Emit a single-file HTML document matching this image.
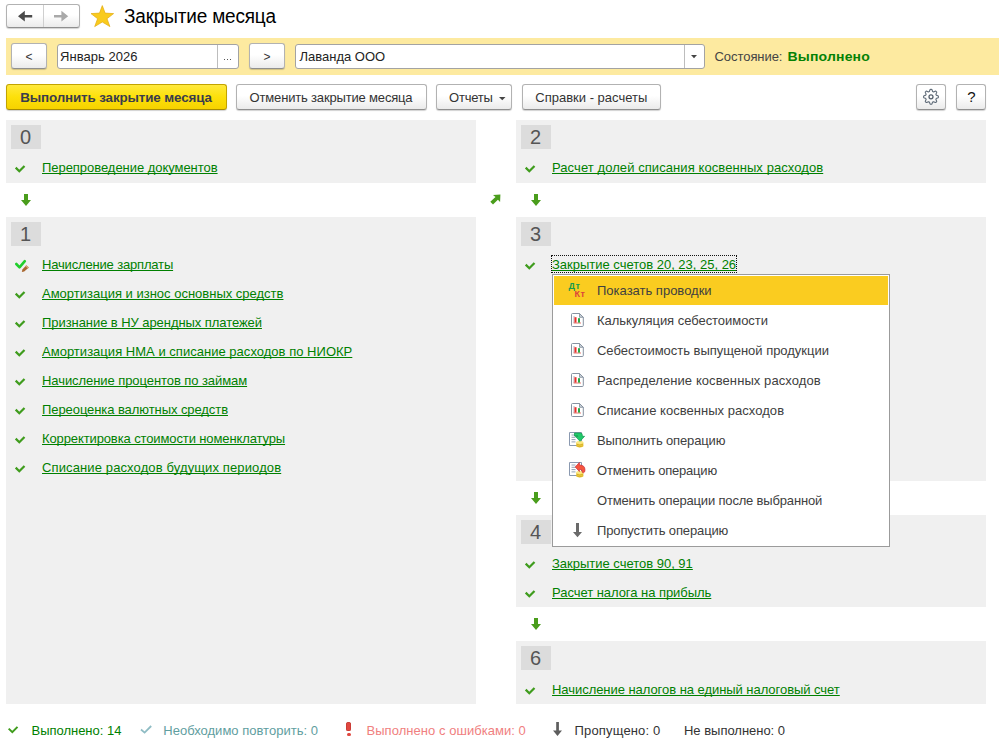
<!DOCTYPE html>
<html lang="ru">
<head>
<meta charset="utf-8">
<title>Закрытие месяца</title>
<style>
html,body{margin:0;padding:0;background:#fff;}
body{width:999px;height:751px;position:relative;overflow:hidden;font-family:"Liberation Sans",Arial,sans-serif;font-size:13px;color:#333;}
.abs{position:absolute;white-space:nowrap;}
.t{position:absolute;white-space:nowrap;font-size:13px;line-height:16px;}
.lnk{color:#008000;text-decoration:underline;text-decoration-thickness:1px;text-underline-offset:1px;text-decoration-skip-ink:none;}
.btn{position:absolute;box-sizing:border-box;border:1px solid #b2b2b2;border-bottom-color:#8f8f8f;border-radius:3px;background:linear-gradient(#ffffff 0%,#ffffff 45%,#ebebeb 100%);box-shadow:0 1px 1px rgba(0,0,0,.18);}
.inp{position:absolute;box-sizing:border-box;border:1px solid #a3a3a3;border-radius:3px;background:#fff;}
.blk{position:absolute;background:#f0f0f0;}
.num{position:absolute;width:30px;height:24px;background:#dcdcdc;color:#555;font-size:20px;line-height:24px;text-align:center;text-indent:-1px;}
svg{position:absolute;overflow:visible;}
</style>
</head>
<body>
<!-- navigation -->
<div class="btn" style="left:6px;top:4px;width:74px;height:24px;"></div>
<div class="abs" style="left:43px;top:5px;width:1px;height:22px;background:#cfcfcf;"></div>
<svg style="left:0;top:0" width="120" height="30" viewBox="0 0 120 30">
<path d="M18 16.200 L24.800 10.800 L24.800 15 L32.200 15 L32.200 17.500 L24.800 17.500 L24.800 21.600 Z" fill="#4a4a4a"/>
<path d="M68.200 16.200 L61.400 10.800 L61.400 15 L54 15 L54 17.500 L61.400 17.500 L61.400 21.600 Z" fill="#a9a9a9"/>
<path d="M102.300 5.600 L105.100 13.100 L113.600 13.600 L107 18.700 L109.900 26.600 L102.300 22 L94.700 26.600 L97.600 18.700 L91 13.600 L99.500 13.100 Z" fill="#f9cb1d" stroke="#e2aa10" stroke-width="0.700" stroke-linejoin="round"/>
</svg>
<div class="t" style="left:124.0px;top:6px;font-size:19px;line-height:22px;transform:scaleY(1.03);transform-origin:0 17px;color:#000;letter-spacing:-0.179px;">Закрытие месяца</div>

<!-- yellow band -->
<div class="abs" style="left:6px;top:38px;width:993px;height:37px;background:#fdeaa0;"></div>
<div class="btn" style="left:11px;top:43px;width:36px;height:26px;"></div>
<div class="t" style="left:25.600px;top:49px;color:#333;font-size:12px;">&lt;</div>
<div class="inp" style="left:57px;top:44px;width:182px;height:25px;"></div>
<div class="abs" style="left:217px;top:45px;width:1px;height:23px;background:#bdbdbd;"></div>
<div class="t" style="left:60.0px;top:49px;color:#222;letter-spacing:0.030px;">Январь 2026</div>
<div class="abs" style="left:224px;top:59px;width:1px;height:1px;background:#555;box-shadow:3px 0 0 #555,6px 0 0 #555;"></div>
<div class="btn" style="left:249px;top:43px;width:36px;height:26px;"></div>
<div class="t" style="left:263.600px;top:49px;color:#333;font-size:12px;">&gt;</div>
<div class="inp" style="left:295px;top:44px;width:410px;height:25px;"></div>
<div class="abs" style="left:684px;top:45px;width:1px;height:23px;background:#bdbdbd;"></div>
<div class="t" style="left:299.5px;top:49px;color:#222;">Лаванда ООО</div>
<svg style="left:691px;top:54.500px" width="6" height="4" viewBox="0 0 6 4"><path d="M0 0 L6 0 L3 3.300 Z" fill="#444"/></svg>
<div class="t" style="left:714.5px;top:49px;color:#444;letter-spacing:-0.056px;">Состояние:</div>
<div class="t" style="left:787.600px;top:48px;transform:scaleY(0.96);transform-origin:0 13px;font-size:14px;font-weight:bold;color:#058205;letter-spacing:0.16px;">Выполнено</div>

<!-- command bar -->
<div class="btn" style="left:6px;top:84px;width:221px;height:26px;background:linear-gradient(#ffe93d 0%,#fde00a 50%,#f6d200 100%);border-color:#c2a300;border-bottom-color:#a88c00;"></div>
<div class="t" style="left:20.2px;top:90px;font-size:13.4px;font-weight:bold;color:#3a3c4c;letter-spacing:-0.133px;">Выполнить закрытие месяца</div>
<div class="btn" style="left:236px;top:84px;width:191px;height:26px;"></div>
<div class="t" style="left:249.6px;top:90px;color:#333;letter-spacing:-0.170px;">Отменить закрытие месяца</div>
<div class="btn" style="left:436px;top:84px;width:76px;height:26px;"></div>
<div class="t" style="left:449.0px;top:90px;color:#333;letter-spacing:-0.200px;">Отчеты</div>
<svg style="left:498.500px;top:97px" width="7" height="3" viewBox="0 0 7 3"><path d="M0 0 L6.500 0 L3.250 3.200 Z" fill="#444"/></svg>
<div class="btn" style="left:522px;top:84px;width:139px;height:26px;"></div>
<div class="t" style="left:535.3px;top:90px;color:#333;">Справки - расчеты</div>
<div class="btn" style="left:916px;top:84px;width:30px;height:26px;"></div>
<svg style="left:0;top:0" width="999" height="120" viewBox="0 0 999 120"><path d="M938.40 96.80 L938.39 97.09 L938.38 97.38 L938.24 97.66 L937.81 97.88 L937.33 98.06 L936.84 98.20 L936.40 98.32 L936.23 98.50 L936.16 98.70 L936.08 98.90 L935.99 99.10 L935.90 99.30 L935.90 99.54 L936.12 99.94 L936.36 100.38 L936.57 100.85 L936.72 101.31 L936.63 101.61 L936.43 101.82 L936.23 102.03 L936.02 102.23 L935.81 102.43 L935.51 102.52 L935.05 102.37 L934.58 102.16 L934.14 101.92 L933.74 101.70 L933.50 101.70 L933.30 101.79 L933.10 101.88 L932.90 101.96 L932.70 102.03 L932.52 102.20 L932.40 102.64 L932.26 103.13 L932.08 103.61 L931.86 104.04 L931.58 104.18 L931.29 104.19 L931.00 104.20 L930.71 104.19 L930.42 104.18 L930.14 104.04 L929.92 103.61 L929.74 103.13 L929.60 102.64 L929.48 102.20 L929.30 102.03 L929.10 101.96 L928.90 101.88 L928.70 101.79 L928.50 101.70 L928.26 101.70 L927.86 101.92 L927.42 102.16 L926.95 102.37 L926.49 102.52 L926.19 102.43 L925.98 102.23 L925.77 102.03 L925.57 101.82 L925.37 101.61 L925.28 101.31 L925.43 100.85 L925.64 100.38 L925.88 99.94 L926.10 99.54 L926.10 99.30 L926.01 99.10 L925.92 98.90 L925.84 98.70 L925.77 98.50 L925.60 98.32 L925.16 98.20 L924.67 98.06 L924.19 97.88 L923.76 97.66 L923.62 97.38 L923.61 97.09 L923.60 96.80 L923.61 96.51 L923.62 96.22 L923.76 95.94 L924.19 95.72 L924.67 95.54 L925.16 95.40 L925.60 95.28 L925.77 95.10 L925.84 94.90 L925.92 94.70 L926.01 94.50 L926.10 94.30 L926.10 94.06 L925.88 93.66 L925.64 93.22 L925.43 92.75 L925.28 92.29 L925.37 91.99 L925.57 91.78 L925.77 91.57 L925.98 91.37 L926.19 91.17 L926.49 91.08 L926.95 91.23 L927.42 91.44 L927.86 91.68 L928.26 91.90 L928.50 91.90 L928.70 91.81 L928.90 91.72 L929.10 91.64 L929.30 91.57 L929.48 91.40 L929.60 90.96 L929.74 90.47 L929.92 89.99 L930.14 89.56 L930.42 89.42 L930.71 89.41 L931.00 89.40 L931.29 89.41 L931.58 89.42 L931.86 89.56 L932.08 89.99 L932.26 90.47 L932.40 90.96 L932.52 91.40 L932.70 91.57 L932.90 91.64 L933.10 91.72 L933.30 91.81 L933.50 91.90 L933.74 91.90 L934.14 91.68 L934.58 91.44 L935.05 91.23 L935.51 91.08 L935.81 91.17 L936.02 91.37 L936.23 91.57 L936.43 91.78 L936.63 91.99 L936.72 92.29 L936.57 92.75 L936.36 93.22 L936.12 93.66 L935.90 94.06 L935.90 94.30 L935.99 94.50 L936.08 94.70 L936.16 94.90 L936.23 95.10 L936.40 95.28 L936.84 95.40 L937.33 95.54 L937.81 95.72 L938.24 95.94 L938.38 96.22 L938.39 96.51 Z" fill="none" stroke="#5f6b78" stroke-width="1.100" stroke-linejoin="round"/><circle cx="931" cy="96.800" r="2" fill="none" stroke="#56616d" stroke-width="1.300"/></svg>
<div class="btn" style="left:956px;top:84px;width:30px;height:26px;"></div>
<div class="t" style="left:967.300px;top:88px;font-size:15px;line-height:18px;color:#111;">?</div>

<!-- left column -->
<div class="blk" style="left:6px;top:120px;width:470px;height:63px;"></div>
<div class="num" style="left:11px;top:125px;">0</div>
<div class="blk" style="left:6px;top:217px;width:470px;height:487px;"></div>
<div class="num" style="left:11px;top:222px;">1</div>

<!-- right column -->
<div class="blk" style="left:516px;top:120px;width:470px;height:63px;"></div>
<div class="num" style="left:521px;top:125px;">2</div>
<div class="blk" style="left:516px;top:217px;width:470px;height:264px;"></div>
<div class="num" style="left:521px;top:222px;">3</div>
<div class="blk" style="left:516px;top:515px;width:470px;height:92px;"></div>
<div class="num" style="left:521px;top:520px;">4</div>
<div class="blk" style="left:516px;top:641px;width:470px;height:63px;"></div>
<div class="num" style="left:521px;top:646px;">6</div>

<!-- operations: left -->
<div class="t lnk" style="left:42.0px;top:160px;letter-spacing:-0.042px;">Перепроведение документов</div>
<div class="t lnk" style="left:42.0px;top:257px;letter-spacing:-0.167px;">Начисление зарплаты</div>
<div class="t lnk" style="left:42.0px;top:286px;">Амортизация и износ основных средств</div>
<div class="t lnk" style="left:42.0px;top:315px;letter-spacing:-0.065px;">Признание в НУ арендных платежей</div>
<div class="t lnk" style="left:42.0px;top:344px;letter-spacing:0.023px;">Амортизация НМА и списание расходов по НИОКР</div>
<div class="t lnk" style="left:42.0px;top:373px;letter-spacing:-0.069px;">Начисление процентов по займам</div>
<div class="t lnk" style="left:42.0px;top:402px;letter-spacing:-0.077px;">Переоценка валютных средств</div>
<div class="t lnk" style="left:42.0px;top:431px;letter-spacing:-0.114px;">Корректировка стоимости номенклатуры</div>
<div class="t lnk" style="left:42.0px;top:460px;letter-spacing:0.121px;">Списание расходов будущих периодов</div>
<!-- operations: right -->
<div class="t lnk" style="left:552.0px;top:160px;letter-spacing:0.077px;">Расчет долей списания косвенных расходов</div>
<div class="t lnk" style="left:552.0px;top:257px;letter-spacing:-0.010px;">Закрытие счетов 20, 23, 25, 26</div>
<div class="abs" style="left:551px;top:255px;width:186px;height:18px;box-sizing:border-box;border:1px dotted #111;"></div>
<div class="t lnk" style="left:552.0px;top:556px;letter-spacing:-0.010px;">Закрытие счетов 90, 91</div>
<div class="t lnk" style="left:552.0px;top:585px;letter-spacing:-0.043px;">Расчет налога на прибыль</div>
<div class="t lnk" style="left:552.0px;top:682px;letter-spacing:-0.048px;">Начисление налогов на единый налоговый счет</div>

<!-- status icons -->
<svg style="left:0;top:0" width="999" height="751" viewBox="0 0 999 751">
<defs>
<path id="ck" d="M0.700 2.600 L4.300 6.200 L9.500 0.900" fill="none" stroke="#3f9c1d" stroke-width="2.200"/>
<path id="dn" d="M3 0 H7 V6 H10 L5 12 L0 6 H3 Z" fill="#4a9d1c"/>
</defs>
<use href="#ck" x="15" y="165"/>
<use href="#ck" x="15" y="291"/>
<use href="#ck" x="15" y="320"/>
<use href="#ck" x="15" y="349"/>
<use href="#ck" x="15" y="378"/>
<use href="#ck" x="15" y="407"/>
<use href="#ck" x="15" y="436"/>
<use href="#ck" x="15" y="465"/>
<path d="M16.300 264 L19.500 267.300 L24.800 261.200" fill="none" stroke="#20cf2c" stroke-width="2.600" stroke-linecap="round" stroke-linejoin="round"/>
<path d="M26.300 265.300 L28.900 267.600 L24.200 271.600 L21.800 272.100 L22.400 269.500 Z" fill="#a9672f"/>
<path d="M26.300 265.300 L28.900 267.600 L27.900 268.500 L25.300 266.200 Z" fill="#d7a77c"/>
<use href="#ck" x="525" y="165"/>
<use href="#ck" x="525" y="262"/>
<use href="#ck" x="525" y="561"/>
<use href="#ck" x="525" y="590"/>
<use href="#ck" x="525" y="687"/>
<use href="#dn" x="21" y="194"/>
<use href="#dn" x="531" y="194"/>
<use href="#dn" x="531" y="492"/>
<use href="#dn" x="531" y="618"/>
<path d="M490.300 201.700 L495.500 197 L493 194.900 L500.400 194.400 L500.100 202 L497.900 199.700 L493 204.500 Z" fill="#4a9d1c"/>
</svg>

<!-- footer legend -->
<svg style="left:8px;top:726px" width="10" height="8" viewBox="0 0 10 8"><path d="M0.700 2.600 L4.300 6.200 L9.500 0.900" fill="none" stroke="#3f9c1d" stroke-width="2"/></svg>
<div class="t" style="left:31.5px;top:723px;color:#008000;letter-spacing:-0.017px;">Выполнено: 14</div>
<svg style="left:140px;top:725px" width="12" height="9" viewBox="0 0 12 9"><path d="M1 4.500 L4.600 7.600 L11.200 1" fill="none" stroke="#8fbcc4" stroke-width="1.800"/></svg>
<div class="t" style="left:163.3px;top:723px;color:#5f9ea0;letter-spacing:0.009px;">Необходимо повторить: 0</div>
<div class="abs" style="left:346px;top:722px;width:5px;height:9px;background:#e0473f;border-radius:2.500px 2.500px 2px 2px;box-shadow:inset 0 0 0 0.500px #b8322c;"></div>
<div class="abs" style="left:346.500px;top:732.500px;width:4px;height:3.500px;background:#e0473f;border-radius:1.500px;"></div>
<div class="t" style="left:366.5px;top:723px;color:#f08080;letter-spacing:0.045px;">Выполнено с ошибками: 0</div>
<svg style="left:553px;top:722px" width="9" height="14" viewBox="0 0 9 14"><path d="M3.200 0 H5.900 V8.500 H9 L4.500 14 L0 8.500 H3.200 Z" fill="#5e5e5e"/></svg>
<div class="t" style="left:574.5px;top:723px;color:#333;letter-spacing:0.164px;">Пропущено: 0</div>
<div class="t" style="left:684.0px;top:723px;color:#333;letter-spacing:-0.021px;">Не выполнено: 0</div>

<!-- context menu -->
<div class="abs" style="left:552px;top:274px;width:338px;height:273px;box-sizing:border-box;background:#fff;border:1px solid #9b9b9b;"></div>
<div class="abs" style="left:554px;top:276px;width:334px;height:29px;background:#facc20;"></div>
<div class="t" style="left:568.600px;top:281px;letter-spacing:0.4px;font-size:9px;font-weight:bold;line-height:10px;color:#1b9a4b;">Дт</div>
<div class="t" style="left:574.600px;top:289px;letter-spacing:0.3px;font-size:9px;font-weight:bold;line-height:10px;color:#dc443c;">Кт</div>
<div class="t" style="left:597.0px;top:283px;color:#404040;">Показать проводки</div>
<div class="t" style="left:597.0px;top:313px;color:#404040;letter-spacing:-0.042px;">Калькуляция себестоимости</div>
<div class="t" style="left:597.0px;top:343px;color:#404040;letter-spacing:-0.022px;">Себестоимость выпущеной продукции</div>
<div class="t" style="left:597.0px;top:373px;color:#404040;letter-spacing:0.087px;">Распределение косвенных расходов</div>
<div class="t" style="left:597.0px;top:403px;color:#404040;letter-spacing:0.038px;">Списание косвенных расходов</div>
<div class="t" style="left:597.0px;top:433px;color:#404040;letter-spacing:-0.135px;">Выполнить операцию</div>
<div class="t" style="left:597.0px;top:463px;color:#404040;letter-spacing:-0.206px;">Отменить операцию</div>
<div class="t" style="left:597.0px;top:493px;color:#404040;letter-spacing:-0.172px;">Отменить операции после выбранной</div>
<div class="t" style="left:597.0px;top:523px;color:#404040;letter-spacing:-0.128px;">Пропустить операцию</div>
<svg style="left:0;top:0" width="999" height="751" viewBox="0 0 999 751">
<defs>
<g id="rep">
<path d="M1.500 0.500 H8.500 L12.300 4.300 V12.500 Q12.300 13.500 11.300 13.500 H1.500 Q0.500 13.500 0.500 12.500 V1.500 Q0.500 0.500 1.500 0.500 Z" fill="#fff" stroke="#8591a0" stroke-width="1"/>
<path d="M8.500 0.500 V4.300 H12.300 Z" fill="#c9d0d8" stroke="#7d8a99" stroke-width="0.800"/>
<rect x="2.600" y="3" width="0.800" height="7" fill="#9aa3ad"/>
<rect x="2.600" y="9.600" width="7.400" height="0.800" fill="#d9534a"/>
<rect x="3.500" y="4.200" width="2" height="5.400" fill="#ea2e2a"/>
<rect x="7" y="5.200" width="2" height="4.400" fill="#27a844"/>
</g>
<g id="doc">
<path d="M0.500 0.500 H12.500 V13.500 H0.500 Z" fill="#fff" stroke="#8a99b0" stroke-width="1"/>
<path d="M2.500 3 H6.500 M2.500 5.300 H6.500 M2.500 7.600 H6.500 M2.500 9.900 H6.500" stroke="#93a0b3" stroke-width="1"/>
</g>
<g id="coin">
<path d="M0 1.800 V6 Q3.500 8.200 7 6 V1.800 Z" fill="#f3d245"/>
<ellipse cx="3.500" cy="1.800" rx="3.500" ry="1.600" fill="#fbe884"/>
<path d="M0 3.600 Q3.500 5.800 7 3.600 M0 5.200 Q3.500 7.400 7 5.200" fill="none" stroke="#c9a21c" stroke-width="0.700"/>
</g>
</defs>
<use href="#rep" x="571" y="313"/>
<use href="#rep" x="571" y="343"/>
<use href="#rep" x="571" y="373"/>
<use href="#rep" x="571" y="403"/>
<use href="#doc" x="569" y="432"/>
<use href="#coin" x="576.300" y="440.500"/>
<path d="M574.500 433 H580.500 Q582.300 433 582.300 435 V436.300 H584.600 L580 441.300 L575.400 436.300 H578 V436 H574.500 Z" fill="#22c96b" stroke="#0c9a4c" stroke-width="0.700" stroke-linejoin="round"/>
<use href="#doc" x="569" y="462"/>
<use href="#coin" x="576.300" y="470.500"/>
<path d="M575.200 467 L579.400 462.500 V465 Q585 465 585 470 Q585 472.600 583.300 472.800 Q582 472.800 582 471 Q582 469.300 579.400 469.300 V471.500 Z" fill="#f5553d" stroke="#c92c3c" stroke-width="0.700" stroke-linejoin="round"/>
<path d="M576 523 H579 V532 H582 L577.500 537.200 L573 532 H576 Z" fill="#6a6a6a"/>
</svg>
</body>
</html>
